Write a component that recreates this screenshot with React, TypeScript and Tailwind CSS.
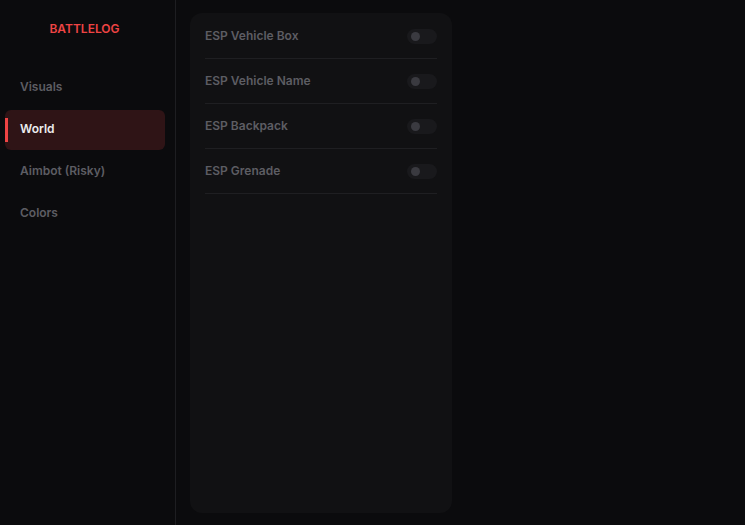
import React, { useState } from "react";

const tabs = ["Visuals", "World", "Aimbot (Risky)", "Colors"];

const worldOptions = [
  "ESP Vehicle Box",
  "ESP Vehicle Name",
  "ESP Backpack",
  "ESP Grenade",
];

const Toggle = ({ on, onClick }: { on: boolean; onClick: () => void }) => (
  <button
    onClick={onClick}
    className={`relative w-[30px] h-[15px] rounded-full ${
      on ? "bg-[#7f1d1d]" : "bg-[#19191c]"
    }`}
  >
    <span
      className={`absolute top-[3px] w-[9px] h-[9px] rounded-full ${
        on ? "left-[17px] bg-[#ef4444]" : "left-[4px] bg-[#3a3a40]"
      }`}
    />
  </button>
);

const App = () => {
  const [active, setActive] = useState("World");
  const [enabled, setEnabled] = useState<Record<string, boolean>>({});

  return (
    <div
      className="flex w-full h-[525px] bg-[#0b0b0d] overflow-hidden"
      style={{ fontFamily: "Inter, 'Noto Sans', sans-serif" }}
    >
      {/* Sidebar */}
      <aside className="w-[176px] shrink-0 border-r border-[#1e1e21] flex flex-col">
        <div className="h-[58px] flex items-end justify-center pb-[23px] pr-[6px]">
          <h1 className="text-[12px] font-semibold tracking-normal text-[#ef4444] leading-none">
            BATTLELOG
          </h1>
        </div>
        <nav className="flex flex-col gap-[2px] px-[5px] mt-[10px]">
          {tabs.map((tab) => {
            const isActive = tab === active;
            return (
              <button
                key={tab}
                onClick={() => setActive(tab)}
                className={`relative h-[40px] w-[160px] flex items-center pl-[15px] rounded-md text-left text-[12px] font-semibold ${
                  isActive
                    ? "bg-[#2f1416] text-[#ececee]"
                    : "text-[#5d5d63]"
                }`}
              >
                {isActive && (
                  <span className="absolute left-0 top-[8px] w-[3px] h-[24px] bg-[#ef4444]" />
                )}
                <span className="-mt-[2px]">{tab}</span>
              </button>
            );
          })}
        </nav>
      </aside>

      {/* Content */}
      <main className="flex-1 pl-[14px] pt-[13px] pb-[12px]">
        <div className="w-[262px] h-full rounded-xl bg-[#111113] px-[15px] pt-px">
          {worldOptions.map((opt) => (
            <div
              key={opt}
              className="h-[45px] flex items-center justify-between border-b border-[#1f1f22]"
            >
              <span className="text-[12px] font-semibold text-[#5d5d63]">{opt}</span>
              <Toggle
                on={!!enabled[opt]}
                onClick={() =>
                  setEnabled((prev) => ({ ...prev, [opt]: !prev[opt] }))
                }
              />
            </div>
          ))}
        </div>
      </main>
    </div>
  );
};

export default App;
